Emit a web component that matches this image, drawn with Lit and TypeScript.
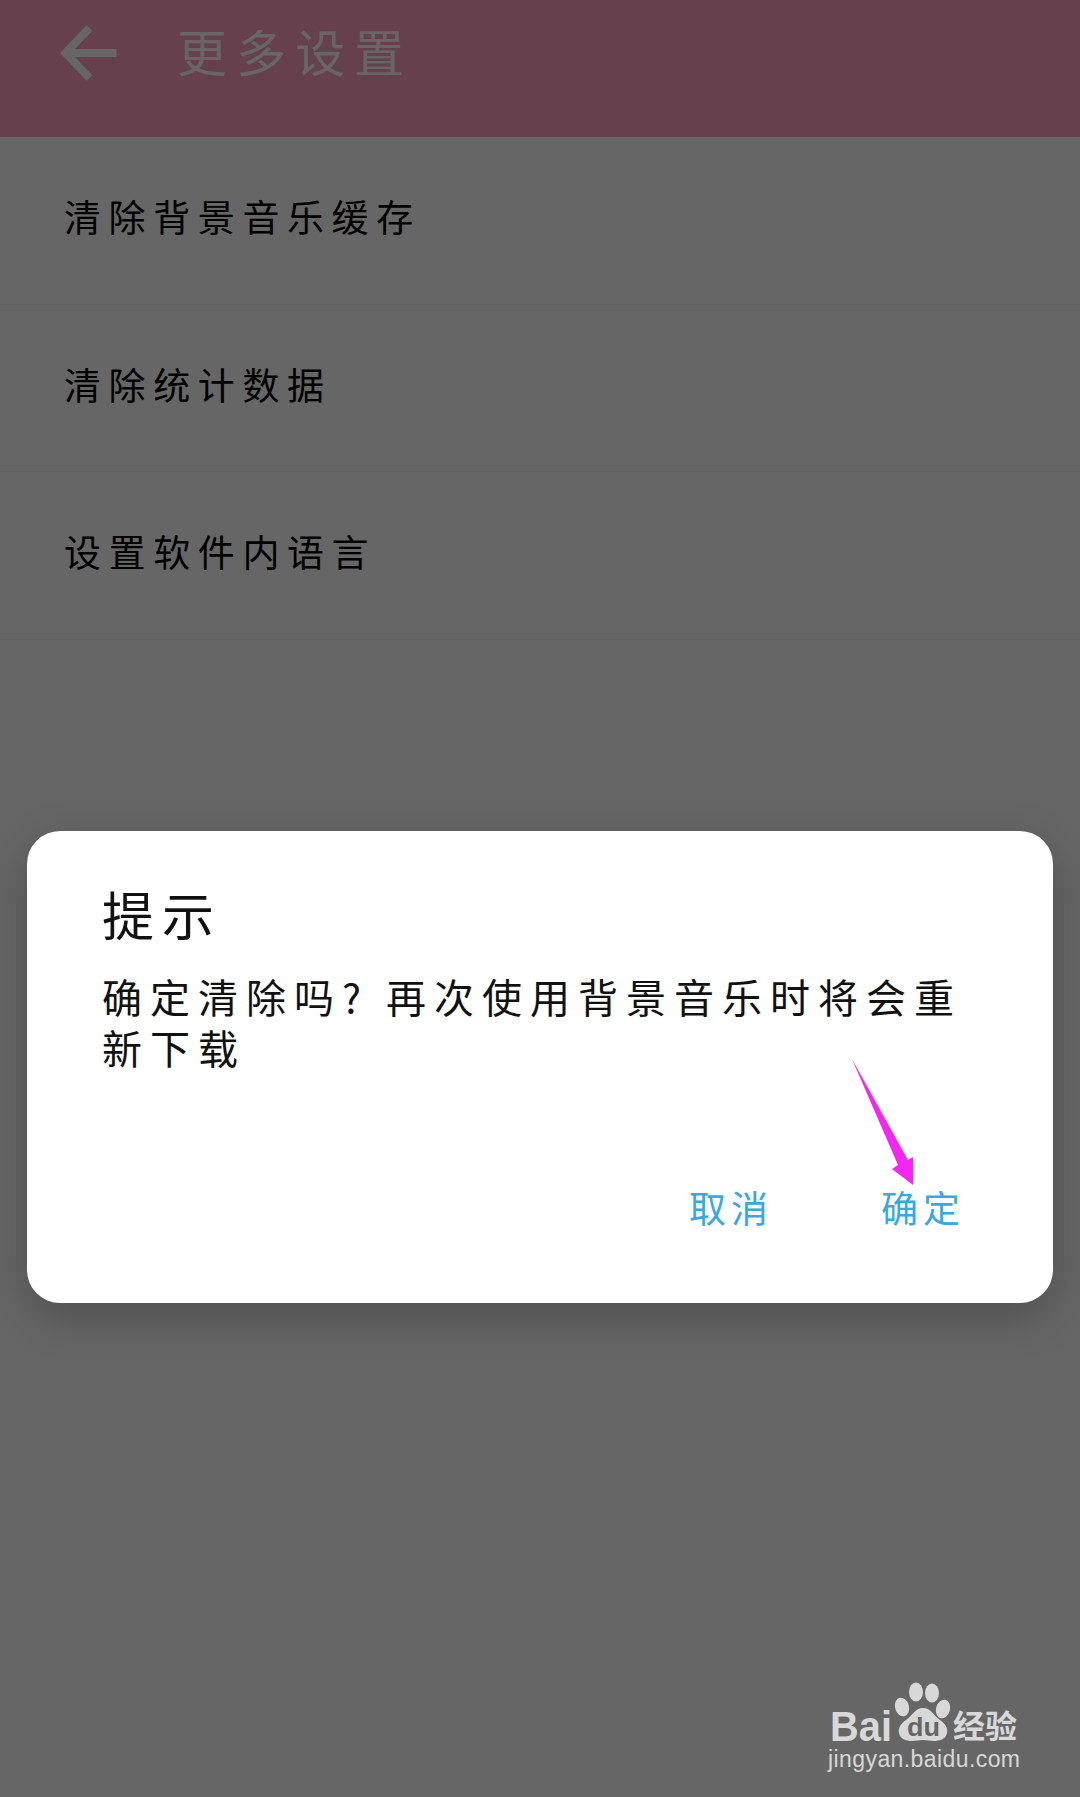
import { LitElement, html, css } from 'lit';
import { customElement } from 'lit/decorators.js';

const ROWS = ['清除背景音乐缓存', '清除统计数据', '设置软件内语言'];

@customElement('app-root')
export class AppRoot extends LitElement {
  static styles = css`
    :host {
      display: block;
      position: relative;
      width: 1080px;
      height: 1797px;
      overflow: hidden;
      background: #fff;
      font-family: "Noto Sans CJK SC", "Noto Sans", sans-serif;
    }

    .app-bar {
      height: 137px;
      display: flex;
      align-items: flex-start;
      background: #ffa2c0;
      color: #fff;
    }
    .back {
      width: 59px;
      height: 56px;
      margin: 25px 0 0 60px;
      flex: none;
    }
    .app-title {
      margin: 14px 0 0 58px;
      font-size: 50px;
      line-height: 72px;
      letter-spacing: 9px;
    }

    .row {
      height: 167.5px;
      box-sizing: border-box;
      padding: 0 0 8px 64px;
      display: flex;
      align-items: center;
      border-bottom: 1px solid #f0f0f0;
      font-size: 37px;
      letter-spacing: 7.6px;
      color: #000;
    }

    .scrim {
      position: absolute;
      inset: 0;
      background: rgba(0, 0, 0, 0.6);
      padding: 831px 27px 0 27px;
    }
    .dialog {
      position: relative;
      height: 472px;
      box-sizing: border-box;
      padding: 49px 76px 0 75px;
      background: #fff;
      border-radius: 33px;
      box-shadow: 0 14px 44px rgba(0, 0, 0, 0.22);
      display: flex;
      flex-direction: column;
    }
    .dialog-title {
      font-size: 52px;
      line-height: 68px;
      letter-spacing: 8px;
      color: #111;
    }
    .dialog-body {
      margin-top: 23px;
      font-size: 40px;
      line-height: 51px;
      letter-spacing: 8px;
      color: #111;
    }
    .actions {
      margin-top: auto;
      padding: 0 0 71px 0;
      display: flex;
      justify-content: flex-end;
      gap: 108px;
      margin-right: 12px;
      font-size: 37px;
      line-height: 50px;
      letter-spacing: 5px;
      color: #35a9e1;
    }

    .pointer {
      position: absolute;
      left: 825px;
      top: 228px;
      width: 61px;
      height: 126px;
    }

    .watermark {
      position: absolute;
      left: 825px;
      top: 1680px;
      width: 200px;
      height: 105px;
    }
    .watermark text { fill: #d8d8d8; }
    .watermark .wm-du {
      fill: #666;
      font-family: "Liberation Sans", sans-serif;
      font-weight: 700;
      font-size: 26px;
    }
    .wm-mark {
      font-family: "Liberation Sans", sans-serif;
      font-weight: 700;
      font-size: 42px;
    }
    .wm-cn {
      font-family: "Noto Sans CJK SC", sans-serif;
      font-weight: 700;
      font-size: 32px;
    }
    .wm-url {
      font-family: "Liberation Sans", sans-serif;
      font-size: 23px;
    }
  `;

  render() {
    return html`
      <div class="app-bar">
        <svg class="back" viewBox="0 0 58 56">
          <path d="M56 28H6M29 3 5 28l24 25" fill="none" stroke="#fff" stroke-width="8" />
        </svg>
        <div class="app-title">更多设置</div>
      </div>
      ${ROWS.map((r) => html`<div class="row">${r}</div>`)}
      <div class="scrim">
        <div class="dialog">
          <div class="dialog-title">提示</div>
          <div class="dialog-body">确定清除吗? 再次使用背景音乐时将会重新下载</div>
          <div class="actions"><span>取消</span><span>确定</span></div>
          <svg class="pointer" viewBox="0 0 61 126">
            <path d="M0 0 56 101 61 98V126L40 110 46 106Z" fill="#f526f0" />
          </svg>
        </div>
        <svg class="watermark" viewBox="0 0 200 105">
          <text class="wm-mark" x="5" y="61" textLength="62" lengthAdjust="spacingAndGlyphs">Bai</text>
          <g fill="#d8d8d8">
            <ellipse cx="91" cy="12" rx="7" ry="9.5" />
            <ellipse cx="107" cy="13" rx="7" ry="9.5" />
            <ellipse cx="77" cy="27" rx="7" ry="9.5" transform="rotate(-15 77 27)" />
            <ellipse cx="118" cy="29" rx="7" ry="9.5" transform="rotate(15 118 29)" />
            <path d="M98 28c8 0 11 8 17 12 6 4 8 9 7 13-1 6-7 8-13 8-4 0-7-1-11-1s-7 1-11 1c-6 0-12-2-13-8-1-4 1-9 7-13 6-4 9-12 17-12Z" />
          </g>
          <text class="wm-du" x="82" y="56" textLength="33" lengthAdjust="spacingAndGlyphs">du</text>
          <text class="wm-cn" x="128" y="58" textLength="64" lengthAdjust="spacingAndGlyphs">经验</text>
          <text class="wm-url" x="3" y="87" textLength="192">jingyan.baidu.com</text>
        </svg>
      </div>
    `;
  }
}
